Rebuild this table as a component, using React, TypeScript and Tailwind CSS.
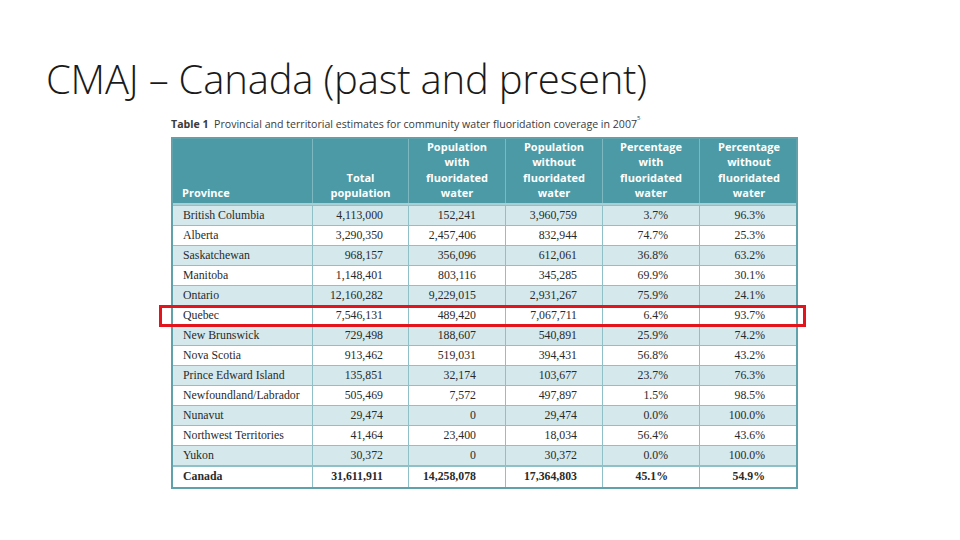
const rows: string[][] = [
  ['British Columbia', '4,113,000', '152,241', '3,960,759', '3.7%', '96.3%'],
  ['Alberta', '3,290,350', '2,457,406', '832,944', '74.7%', '25.3%'],
  ['Saskatchewan', '968,157', '356,096', '612,061', '36.8%', '63.2%'],
  ['Manitoba', '1,148,401', '803,116', '345,285', '69.9%', '30.1%'],
  ['Ontario', '12,160,282', '9,229,015', '2,931,267', '75.9%', '24.1%'],
  ['Quebec', '7,546,131', '489,420', '7,067,711', '6.4%', '93.7%'],
  ['New Brunswick', '729,498', '188,607', '540,891', '25.9%', '74.2%'],
  ['Nova Scotia', '913,462', '519,031', '394,431', '56.8%', '43.2%'],
  ['Prince Edward Island', '135,851', '32,174', '103,677', '23.7%', '76.3%'],
  ['Newfoundland/Labrador', '505,469', '7,572', '497,897', '1.5%', '98.5%'],
  ['Nunavut', '29,474', '0', '29,474', '0.0%', '100.0%'],
  ['Northwest Territories', '41,464', '23,400', '18,034', '56.4%', '43.6%'],
  ['Yukon', '30,372', '0', '30,372', '0.0%', '100.0%'],
];

const total = ['Canada', '31,611,911', '14,258,078', '17,364,803', '45.1%', '54.9%'];

const headers = [
  ['Total', 'population'],
  ['Population', 'with', 'fluoridated', 'water'],
  ['Population', 'without', 'fluoridated', 'water'],
  ['Percentage', 'with', 'fluoridated', 'water'],
  ['Percentage', 'without', 'fluoridated', 'water'],
];

const cols = 'grid grid-cols-[139px_96px_97px_97px_97px_99px]';
const pads = ['pr-[25px]', 'pr-[29px]', 'pr-[25px]', 'pr-[31px]', 'pr-[33px]'];

function Row({ cells, shaded, bold }: { cells: string[]; shaded: boolean; bold?: boolean }) {
  return (
    <div
      className={`${cols} ${bold ? 'h-[22px] border-t-2' : 'h-[20px] border-t'} border-[#8fbfc7] ${
        shaded ? 'bg-[#d5e8ec]' : 'bg-white'
      } text-[11.8px] text-[#2a2a2a] ${bold ? 'font-bold' : ''}`}
    >
      <div className="flex items-center pl-[10px]">{cells[0]}</div>
      {cells.slice(1).map((c, i) => (
        <div key={i} className={`flex items-center justify-end border-l border-[#8fbfc7] ${pads[i]}`}>
          {c}
        </div>
      ))}
    </div>
  );
}

export default function App() {
  return (
    <div className="w-[960px] h-[540px] bg-white overflow-hidden flex flex-col">
      {/* Slide title */}
      <h1
        className="pl-[46px] pt-[52px] text-[40px] leading-[54px] font-light text-[#1a1a1a] tracking-[-0.2px]"
        style={{ fontFamily: '"Open Sans", sans-serif' }}
      >
        CMAJ – Canada (past and present)
      </h1>

      <div className="pl-[171px] pt-[11px]">
        <p
          className="text-[10.6px] leading-[14px] text-[#3a3a3a] mb-[6px]"
          style={{ fontFamily: '"Open Sans", sans-serif' }}
        >
          <span className="font-bold">Table 1</span>&nbsp; Provincial and territorial estimates for community water
          fluoridation coverage in 2007<sup className="text-[6px] align-[5px]">5</sup>
        </p>

        <div className="relative w-[627px]">
          <div className="border-2 border-[#5fa2ac]" style={{ fontFamily: '"Liberation Serif", serif' }}>
            {/* Header */}
            <div
              className={`${cols} h-[66px] bg-[#4b9aa5] text-white font-bold text-[11px] leading-[15.3px] border-b-2 border-[#a9cfd5]`}
              style={{ fontFamily: '"Open Sans", sans-serif' }}
            >
              <div className="flex items-end pl-[9px] pb-[3px]">Province</div>
              {headers.map((h, i) => (
                <div
                  key={i}
                  className="flex flex-col items-center justify-end pb-[3px] border-l border-[#7db7bf] text-center"
                >
                  {h.map((l) => (
                    <span key={l}>{l}</span>
                  ))}
                </div>
              ))}
            </div>
            {rows.map((r, i) => (
              <Row key={r[0]} cells={r} shaded={i % 2 === 0} />
            ))}
            <Row cells={total} shaded={false} bold />
          </div>

          {/* Quebec highlight */}
          <div className="absolute left-[-12px] right-[-8px] top-[168px] h-[22px] border-[3px] border-[#e3141b]" />
        </div>
      </div>
    </div>
  );
}
